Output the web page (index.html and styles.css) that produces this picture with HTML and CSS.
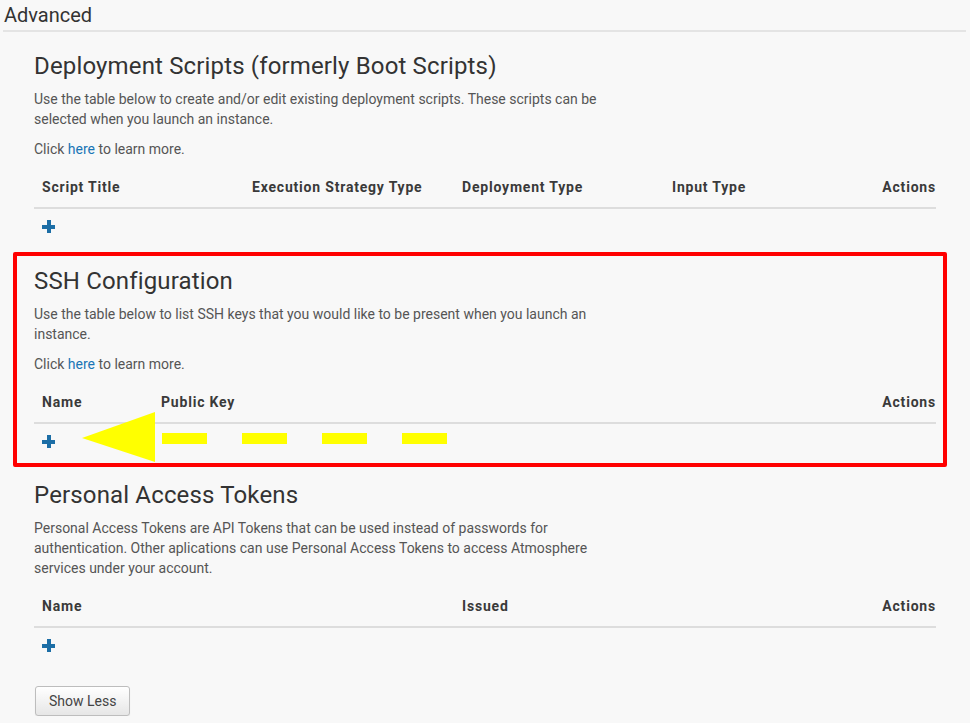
FILE: index.html
```html
<!DOCTYPE html>
<html>
<head>
<meta charset="utf-8">
<link rel="stylesheet" href="styles.css">
</head>
<body>
<div class="page">
  <div class="panel-title">Advanced</div>
  <div class="content">
    <div class="section">
      <h3>Deployment Scripts (formerly Boot Scripts)</h3>
      <p class="desc">Use the table below to create and/or edit existing deployment scripts. These scripts can be selected when you launch an instance.</p>
      <p class="desc">Click <a href="#">here</a> to learn more.</p>
      <table class="grid">
        <colgroup><col class="w210"><col class="w210"><col class="w210"><col class="w210"><col></colgroup>
        <thead>
          <tr><th>Script Title</th><th>Execution Strategy Type</th><th>Deployment Type</th><th>Input Type</th><th class="right">Actions</th></tr>
        </thead>
        <tbody>
          <tr><td colspan="5"><span class="plus"></span></td></tr>
        </tbody>
      </table>
    </div>

    <div class="section annotated">
      <h3>SSH Configuration</h3>
      <p class="desc">Use the table below to list SSH keys that you would like to be present when you launch an instance.</p>
      <p class="desc">Click <a href="#">here</a> to learn more.</p>
      <table class="grid tight">
        <colgroup><col class="w119"><col><col class="w80"></colgroup>
        <thead>
          <tr><th>Name</th><th>Public Key</th><th class="right">Actions</th></tr>
        </thead>
        <tbody>
          <tr><td colspan="3"><span class="plus"></span></td></tr>
        </tbody>
      </table>
      <div class="redbox"></div>
      <svg class="arrow" width="420" height="200" viewBox="0 0 420 200">
        <polygon points="48,170 121,144 121,194" fill="#ffff00"/>
        <rect x="128" y="165" width="45" height="11" fill="#ffff00"/>
        <rect x="208" y="165" width="45" height="11" fill="#ffff00"/>
        <rect x="288" y="165" width="45" height="11" fill="#ffff00"/>
        <rect x="368" y="165" width="45" height="11" fill="#ffff00"/>
      </svg>
    </div>

    <div class="section">
      <h3>Personal Access Tokens</h3>
      <p class="desc">Personal Access Tokens are API Tokens that can be used instead of passwords for authentication. Other aplications can use Personal Access Tokens to access Atmosphere services under your account.</p>
      <table class="grid tight">
        <colgroup><col class="w420"><col><col class="w80"></colgroup>
        <thead>
          <tr><th>Name</th><th>Issued</th><th class="right">Actions</th></tr>
        </thead>
        <tbody>
          <tr><td colspan="3"><span class="plus"></span></td></tr>
        </tbody>
      </table>
    </div>

    <button class="btn">Show Less</button>
  </div>
</div>
</body>
</html>
```

FILE: styles.css
```css
html, body {
  margin: 0;
  padding: 0;
  background: #f8f8f8;
}

body {
  font-family: Roboto, "Liberation Sans", sans-serif;
  font-size: 14px;
  line-height: 20px;
  color: #555;
}

.page {
  padding: 0 4px 0 3px;
}

.panel-title {
  font-size: 20px;
  line-height: 30px;
  color: #333;
  padding-left: 1px;
  border-bottom: 2px solid #e4e4e4;
}

.content {
  padding-left: 31px;
}

.section {
  position: relative;
}

h3 {
  font-size: 24px;
  font-weight: 400;
  line-height: 26px;
  letter-spacing: 0.15px;
  color: #333;
  margin: 21px 0 10px;
}

.desc {
  margin: 0 0 10px;
  max-width: 600px;
}

a {
  color: #1a75b5;
  text-decoration: none;
}

.grid {
  width: 902px;
  border-collapse: collapse;
  table-layout: fixed;
  margin-bottom: 23px;
}

.grid.tight {
  margin-bottom: 22px;
}

.w210 { width: 210px; }
.w119 { width: 119px; }
.w420 { width: 420px; }
.w80 { width: 80px; }

.grid th {
  text-align: left;
  font-weight: 700;
  letter-spacing: 0.8px;
  color: #3a3a3a;
  padding: 8px 8px 10px;
  border-bottom: 2px solid #dddddd;
  white-space: nowrap;
}

.grid th.right {
  text-align: right;
  padding-right: 0;
}

.grid td {
  padding: 8px;
  height: 20px;
}

.plus {
  display: inline-block;
  position: relative;
  width: 13px;
  height: 13px;
  vertical-align: -1px;
}

.plus::before,
.plus::after {
  content: "";
  position: absolute;
  background: #1c6ea6;
}

.plus::before {
  left: 0;
  top: 4.5px;
  width: 13px;
  height: 4px;
}

.plus::after {
  left: 4.5px;
  top: 0;
  width: 4px;
  height: 13px;
}

.btn {
  font-family: Roboto, "Liberation Sans", sans-serif;
  font-size: 14px;
  line-height: 20px;
  color: #444;
  padding: 4px 13px;
  margin-left: 1px;
  border: 1px solid #bdbdbd;
  border-radius: 3px;
  background: linear-gradient(#ffffff, #e6e6e6);
  box-shadow: 0 1px 1px rgba(0, 0, 0, 0.08);
}

/* annotation overlay */
.redbox {
  position: absolute;
  left: -21px;
  top: -16px;
  width: 926px;
  height: 207px;
  border: 4px solid #ff0000;
  border-radius: 2px;
  pointer-events: none;
}

.arrow {
  position: absolute;
  left: 0;
  top: 0;
  pointer-events: none;
}
```
